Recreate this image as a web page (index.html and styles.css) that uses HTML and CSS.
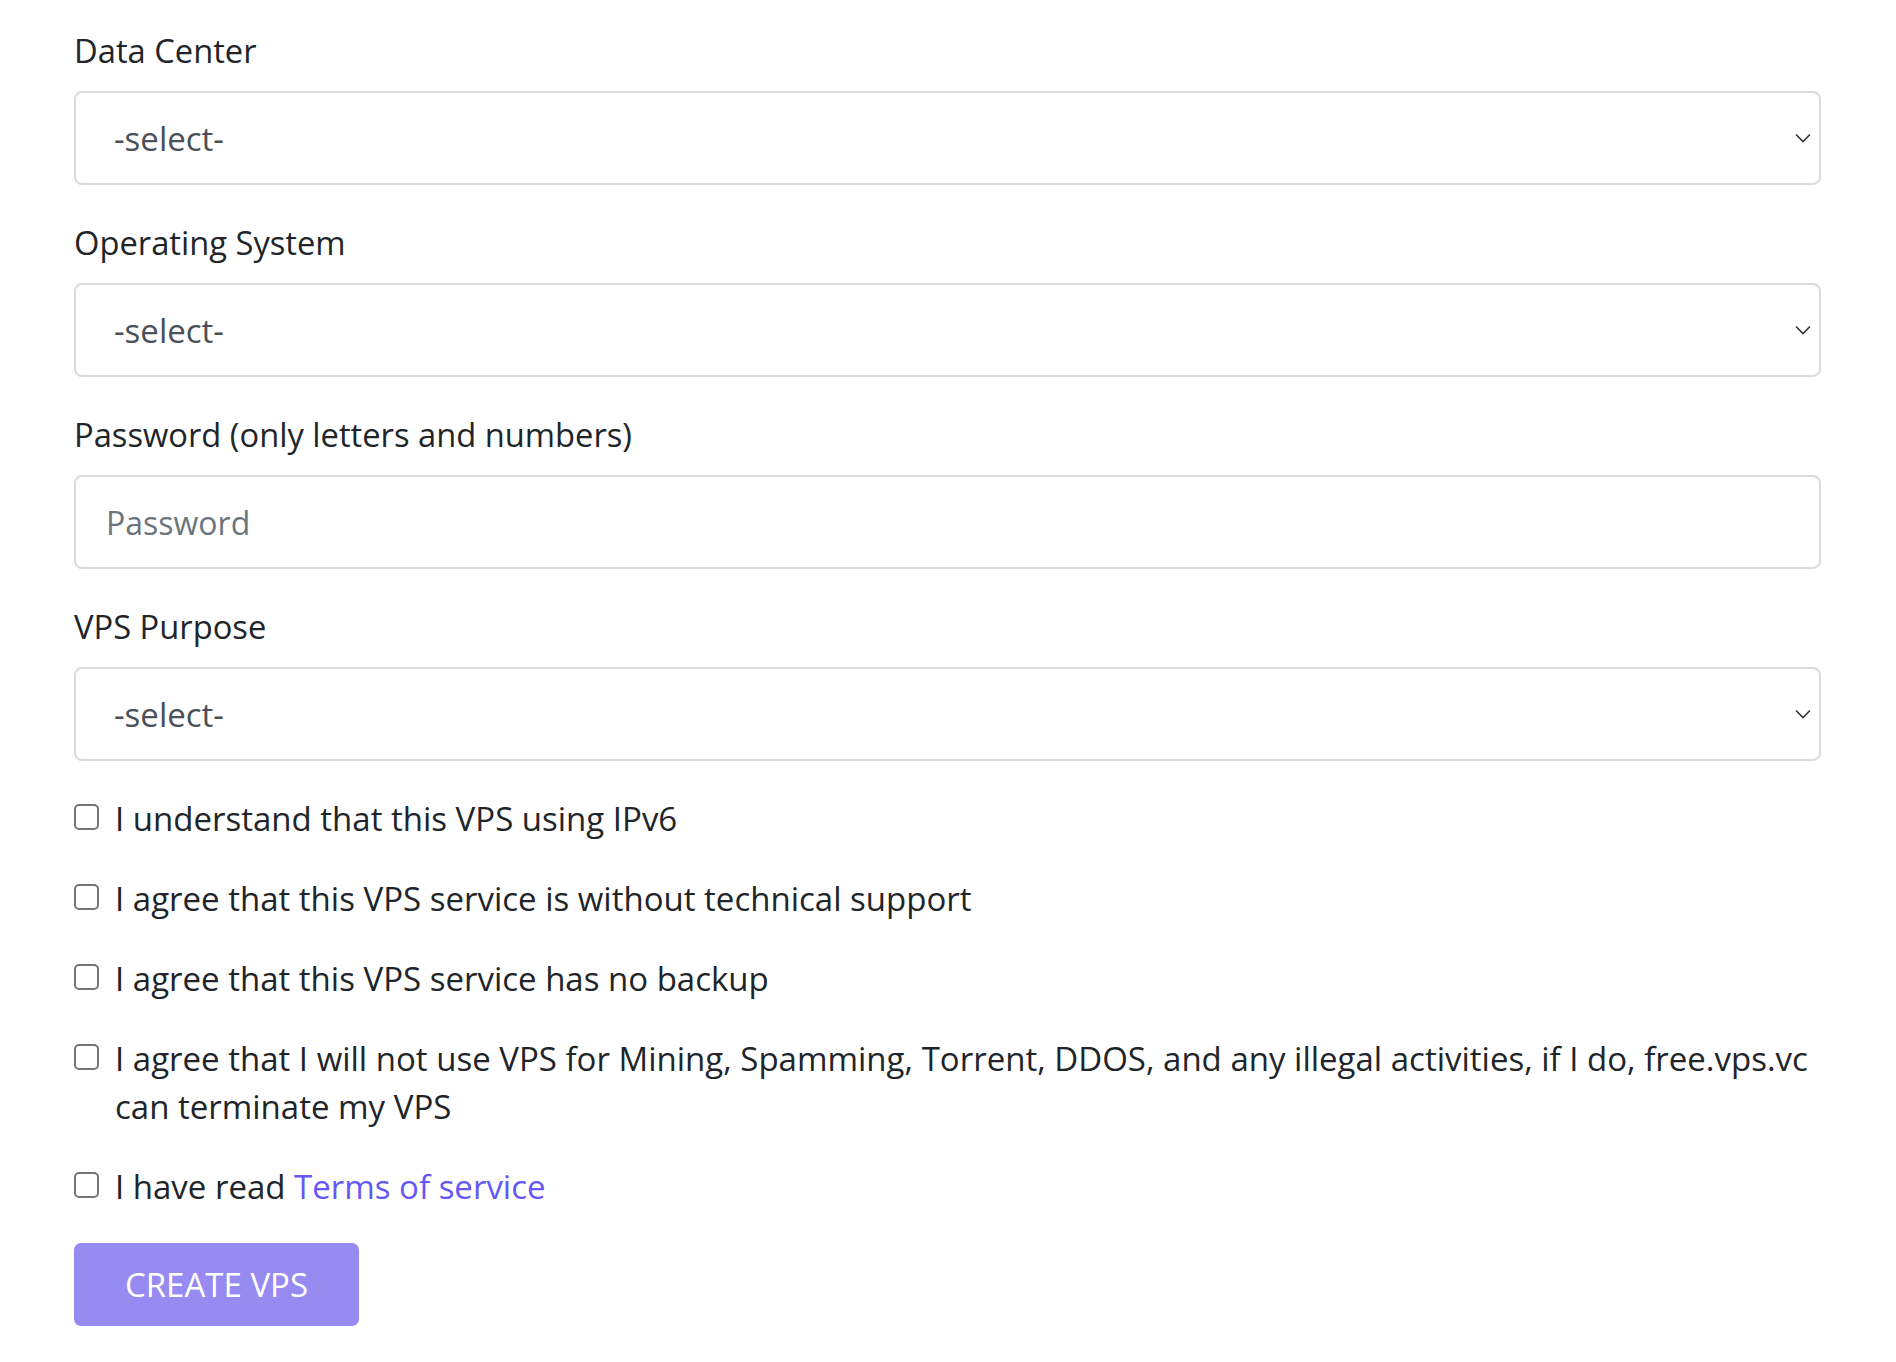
FILE: index.html
```html
<!DOCTYPE html>
<html lang="en">
<head>
<meta charset="utf-8">
<title>Create VPS</title>
<link rel="stylesheet" href="styles.css">
</head>
<body>
<form class="form">
  <div class="group">
    <label class="label">Data Center</label>
    <div class="select-wrap">
      <select class="control select"><option>-select-</option></select>
      <svg class="chev" viewBox="0 0 16 10" width="16" height="10"><path d="M1 1.5l7 7 7-7" fill="none" stroke="#343a40" stroke-width="1.7"/></svg>
    </div>
  </div>
  <div class="group">
    <label class="label">Operating System</label>
    <div class="select-wrap">
      <select class="control select"><option>-select-</option></select>
      <svg class="chev" viewBox="0 0 16 10" width="16" height="10"><path d="M1 1.5l7 7 7-7" fill="none" stroke="#343a40" stroke-width="1.7"/></svg>
    </div>
  </div>
  <div class="group">
    <label class="label">Password (only letters and numbers)</label>
    <input class="control input" type="text" placeholder="Password">
  </div>
  <div class="group">
    <label class="label">VPS Purpose</label>
    <div class="select-wrap">
      <select class="control select"><option>-select-</option></select>
      <svg class="chev" viewBox="0 0 16 10" width="16" height="10"><path d="M1 1.5l7 7 7-7" fill="none" stroke="#343a40" stroke-width="1.7"/></svg>
    </div>
  </div>
  <div class="check">
    <span class="box"></span>
    <span class="check-text">I understand that this VPS using IPv6</span>
  </div>
  <div class="check">
    <span class="box"></span>
    <span class="check-text">I agree that this VPS service is without technical support</span>
  </div>
  <div class="check">
    <span class="box"></span>
    <span class="check-text">I agree that this VPS service has no backup</span>
  </div>
  <div class="check">
    <span class="box"></span>
    <span class="check-text">I agree that I will not use VPS for Mining, Spamming, Torrent, DDOS, and any illegal activities, if I do, free.vps.vc can terminate my VPS</span>
  </div>
  <div class="check">
    <span class="box"></span>
    <span class="check-text">I have read <a class="link" href="#">Terms of service</a></span>
  </div>
  <button class="btn" type="button">CREATE VPS</button>
</form>
</body>
</html>
```
FILE: styles.css
```css
html, body {
  margin: 0;
  padding: 0;
  background: #ffffff;
}
body {
  font-family: "Open Sans", "Noto Sans", "Liberation Sans", sans-serif;
  font-size: 33px;
  line-height: 48px;
  color: #212529;
}
.form {
  width: 1747px;
  padding: 27px 0 0 74px;
}
.group {
  margin-bottom: 34px;
}
.label {
  display: block;
  margin-bottom: 16px;
  font-size: 32.7px;
}
.select-wrap {
  position: relative;
}
.control {
  display: block;
  box-sizing: border-box;
  width: 100%;
  height: 94px;
  margin: 0;
  border: 2px solid #d9dcdf;
  border-radius: 8px;
  background: #fff;
  font-family: inherit;
  font-size: 33px;
  outline: none;
}
.select {
  -webkit-appearance: none;
  appearance: none;
  padding: 0 60px 0 38px;
  color: #495057;
}
.input {
  padding: 0 30px 0 30px;
  color: #495057;
  font-size: 32px;
}
.input::placeholder {
  color: #6c757d;
  opacity: 1;
}
.chev {
  position: absolute;
  right: 10px;
  top: 42px;
  pointer-events: none;
}
.check {
  display: flex;
  align-items: flex-start;
  margin-bottom: 32px;
  font-size: 33px;
}
.box {
  flex: none;
  box-sizing: border-box;
  width: 25px;
  height: 26px;
  margin-top: 9px;
  margin-right: 16px;
  border: 2px solid #767676;
  border-radius: 5px;
  background: #fff;
}
.check-text {
  flex: 1;
}
.link {
  color: #6658f6;
  text-decoration: none;
}
.btn {
  display: block;
  width: 285px;
  height: 83px;
  padding: 0;
  border: none;
  border-radius: 7px;
  background: #978af1;
  color: #ffffff;
  font-family: inherit;
  font-size: 33px;
  cursor: pointer;
}
```
